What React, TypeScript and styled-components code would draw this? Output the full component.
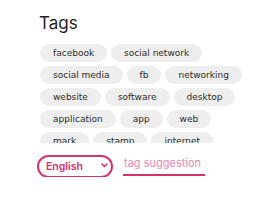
import * as React from 'react';
import styled, { createGlobalStyle } from 'styled-components';

const tags = [
  'facebook',
  'social network',
  'social media',
  'fb',
  'networking',
  'website',
  'software',
  'desktop',
  'application',
  'app',
  'web',
  'mark',
  'stamp',
  'internet',
  'online',
  'network',
];

const GlobalStyle = createGlobalStyle`
  body {
    margin: 0;
    background: #ffffff;
    font-family: Inter, "Noto Sans", sans-serif;
  }
`;

const Panel = styled.div`
  padding: 12px 0 0 38px;
  width: 207px;
`;

const Title = styled.h2`
  margin: 0 0 0 1px;
  font-size: 17px;
  font-weight: 400;
  line-height: 22px;
  color: #1f1f24;
`;

const TagList = styled.div`
  display: flex;
  flex-wrap: wrap;
  gap: 4px;
  margin: 10px 0 0 2px;
  max-height: 99px;
  overflow: hidden;
`;

const Tag = styled.span`
  display: inline-flex;
  align-items: center;
  height: 18px;
  padding: 0 13px;
  border-radius: 9px;
  background: #eeeeee;
  color: #2b2b2b;
  font-family: "DejaVu Sans", sans-serif;
  font-size: 9px;
  white-space: nowrap;
`;

const Controls = styled.div`
  display: flex;
  align-items: flex-start;
  gap: 10px;
  margin-top: 11px;
  margin-left: -1px;
`;

const SelectWrap = styled.div`
  position: relative;
  width: 76px;
  height: 23px;
`;

const Select = styled.select`
  appearance: none;
  width: 100%;
  height: 100%;
  box-sizing: border-box;
  border: 2px solid #d8326c;
  border-radius: 12px;
  background: #fff;
  padding: 0 0 0 7px;
  color: #d8326c;
  font-family: Inter, "Noto Sans", sans-serif;
  font-size: 10.5px;
  font-weight: 600;
  outline: none;
`;

const Chevron = styled.svg`
  position: absolute;
  right: 5px;
  top: 9px;
  pointer-events: none;
`;

const Suggestion = styled.input`
  width: 82px;
  height: 22px;
  box-sizing: border-box;
  border: none;
  border-bottom: 2px solid #d8326c;
  padding: 0 0 2px 1px;
  background: transparent;
  color: #d8326c;
  font-family: Inter, "Noto Sans", sans-serif;
  font-size: 11px;
  outline: none;

  &::placeholder {
    color: #e98aae;
  }
`;

export default function App() {
  return (
    <>
      <GlobalStyle />
      <Panel>
        <Title>Tags</Title>
        <TagList>
          {tags.map((t) => (
            <Tag key={t}>{t}</Tag>
          ))}
        </TagList>
        <Controls>
          <SelectWrap>
            <Select defaultValue="en">
              <option value="en">English</option>
              <option value="fr">Français</option>
            </Select>
            <Chevron width="7" height="5" viewBox="0 0 7 5" fill="none">
              <path
                d="M1 1l2.5 2.5L6 1"
                stroke="#d8326c"
                strokeWidth="1.5"
                strokeLinecap="round"
                strokeLinejoin="round"
              />
            </Chevron>
          </SelectWrap>
          <Suggestion placeholder="tag suggestion" />
        </Controls>
      </Panel>
    </>
  );
}
